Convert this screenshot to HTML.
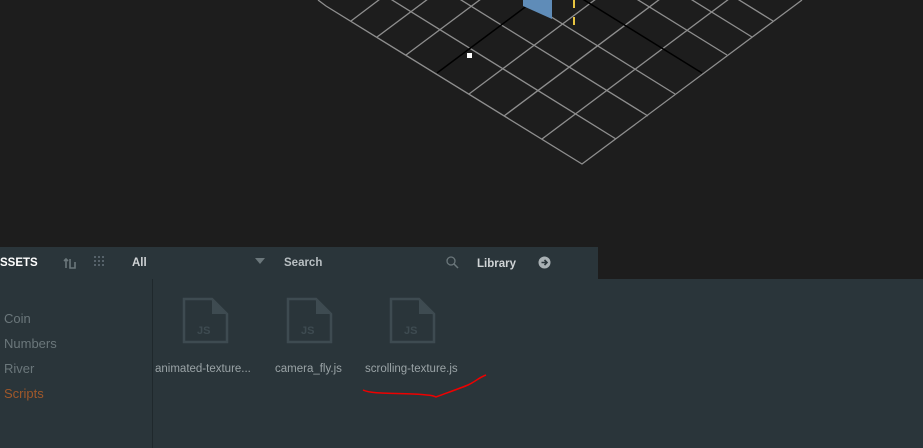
<!DOCTYPE html>
<html><head><meta charset="utf-8"><style>
body{margin:0;width:923px;height:448px;background:#1d1d1d;position:relative;overflow:hidden;font-family:"Liberation Sans",sans-serif}
#hdr{position:absolute;left:0;top:247px;width:598px;height:32px;background:#2a353a}
#panel{position:absolute;left:0;top:279px;width:923px;height:169px;background:#2a353a}
#div{position:absolute;left:152px;top:279px;width:1px;height:169px;background:#1f282c}
.t{position:absolute;font-size:11.5px;font-weight:bold;color:#d0d4d6}
.s{position:absolute;font-size:13px;color:#6b777b;left:4px}
.f{position:absolute;font-size:11.5px;color:#9aa3a6;top:363px}
</style></head><body>
<svg width="923" height="247" style="position:absolute;left:0;top:0">
<g stroke="#8e8e8e" stroke-width="1.3" fill="none">
<polyline points="318,0 326,6 582,164 794,6 802,0"/>
<line x1="542" y1="139" x2="741" y2="-10"/>
<line x1="504" y1="116" x2="672" y2="-10"/>
<line x1="469" y1="94" x2="608" y2="-10"/>
<line x1="406" y1="55" x2="493" y2="-10"/>
<line x1="377" y1="37" x2="440" y2="-10"/>
<line x1="351" y1="21" x2="392" y2="-10"/>
<line x1="616" y1="139" x2="376" y2="-10"/>
<line x1="648" y1="116" x2="445" y2="-10"/>
<line x1="675" y1="94" x2="508" y2="-10"/>
<line x1="727" y1="55" x2="622" y2="-10"/>
<line x1="752" y1="37" x2="676" y2="-10"/>
<line x1="773" y1="21" x2="723" y2="-10"/>
</g>
<g stroke="#000" stroke-width="1.5">
<line x1="437" y1="73" x2="548" y2="-10"/>
<line x1="702" y1="73" x2="568" y2="-10"/>
</g>
<polygon points="523,0 552,0 552,19 523,6" fill="#5f8cb8"/>
<rect x="573" y="0" width="2" height="8" fill="#e8c440"/>
<rect x="573" y="17" width="2" height="8" fill="#e8c440"/>
<rect x="467" y="53" width="5" height="5" fill="#fff"/>
</svg>
<div id="hdr"></div><div id="panel"></div><div id="div"></div>
<div class="t" style="left:0;top:257px;color:#fff">SSETS</div>
<svg style="position:absolute;left:63px;top:256px" width="14" height="14"><path d="M3 12V3M1 5l2-2 2 2M7 3v9h5V6" stroke="#6b777b" stroke-width="1.6" fill="none"/></svg>
<svg style="position:absolute;left:94px;top:256px" width="12" height="12" fill="#56626a"><rect x="0" y="0" width="2" height="2"/><rect x="4" y="0" width="2" height="2"/><rect x="8" y="0" width="2" height="2"/><rect x="0" y="4" width="2" height="2"/><rect x="4" y="4" width="2" height="2"/><rect x="8" y="4" width="2" height="2"/><rect x="0" y="8" width="2" height="2"/><rect x="4" y="8" width="2" height="2"/><rect x="8" y="8" width="2" height="2"/></svg>
<div class="t" style="left:132px;top:257px">All</div>
<svg style="position:absolute;left:255px;top:258px" width="10" height="8"><polygon points="0,0 10,0 5,6" fill="#6b777b"/></svg>
<div class="t" style="left:284px;top:257px;color:#b8bfc2">Search</div>
<svg style="position:absolute;left:446px;top:256px" width="13" height="13"><circle cx="5" cy="5" r="4" stroke="#6b777b" stroke-width="1.3" fill="none"/><path d="M8 8l4 4" stroke="#6b777b" stroke-width="1.5"/></svg>
<div class="t" style="left:477px;top:258px">Library</div>
<svg style="position:absolute;left:538px;top:256px" width="13" height="13"><circle cx="6.5" cy="6.5" r="6" fill="#a9b1b4"/><path d="M3.5 6.5h5M6.5 4l2.5 2.5L6.5 9" stroke="#2a353a" stroke-width="1.6" fill="none"/></svg>
<div class="s" style="top:311px">Coin</div>
<div class="s" style="top:336px">Numbers</div>
<div class="s" style="top:361px">River</div>
<div class="s" style="top:386px;color:#a0582a">Scripts</div>
<svg style="position:absolute;left:182px;top:297px" width="260" height="48">
<g fill="none" stroke="#3e4b51" stroke-width="2.5">
<path d="M2 2h28l15 15v28H2z"/><path d="M106 2h28l15 15v28h-43z"/><path d="M209 2h28l15 15v28h-43z"/>
</g>
<g fill="#3e4b51"><path d="M30 2l15 15H30z"/><path d="M134 2l15 15h-15z"/><path d="M237 2l15 15h-15z"/></g>
<g fill="#3e4b51" font-family="Liberation Sans" font-weight="bold" font-size="11"><text x="15" y="37">JS</text><text x="119" y="37">JS</text><text x="222" y="37">JS</text></g>
</svg>
<div class="f" style="left:155px">animated-texture...</div>
<div class="f" style="left:275px">camera_fly.js</div>
<div class="f" style="left:365px">scrolling-texture.js</div>
<svg style="position:absolute;left:360px;top:370px" width="130" height="30"><path d="M3 20c8 4 30 3 50 4s20 2 23 3c5-2 25-9 32-12s10-7 18-10" stroke="#e00" stroke-width="1.5" fill="none"/></svg>
</body></html>
